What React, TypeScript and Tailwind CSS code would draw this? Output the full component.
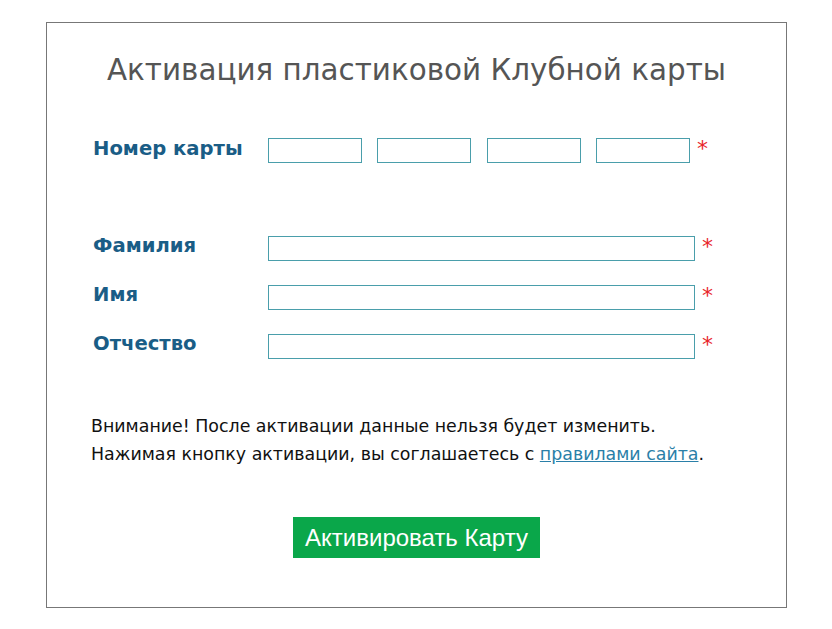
import React from "react";

const Star = () => (
  <span className="text-[#e8262b] text-[22px] leading-none ml-[7px] mt-[0px] font-['DejaVu_Sans',sans-serif]">*</span>
);

export default function App() {
  const labelCls =
    "w-[175px] shrink-0 text-[19.6px] font-bold text-[#1a5d86] font-['DejaVu_Sans',sans-serif] leading-none";
  const inputCls = "h-[25px] border border-[#4a9eab] bg-white outline-none";
  return (
    <div className="w-[832px] h-[629px] bg-white pt-[22px] pl-[46px]">
      <div className="w-[741px] h-[586px] border border-[#777] flex flex-col">
        <h1 className="text-center text-[29.4px] text-[#555] font-['DejaVu_Sans',sans-serif] leading-none mt-[33px]">
          Активация пластиковой Клубной карты
        </h1>
        <div className="pl-[46px] mt-[53px]">
          <div className="flex items-start">
            <div className={labelCls + " pt-[1px]"}>Номер карты</div>
            <div className="flex items-start">
              <input className={inputCls + " w-[94px]"} />
              <input className={inputCls + " w-[94px] ml-[15px]"} />
              <input className={inputCls + " w-[94px] ml-[16px]"} />
              <input className={inputCls + " w-[94px] ml-[15px]"} />
              <Star />
            </div>
          </div>
          <div className="flex flex-col gap-[24px] mt-[73px]">
            {["Фамилия", "Имя", "Отчество"].map((l) => (
              <div key={l} className="flex items-start">
                <div className={labelCls}>{l}</div>
                <input className={inputCls + " w-[427px]"} />
                <Star />
              </div>
            ))}
          </div>
          <div className="-ml-[2px] mt-[53px] text-[17.4px] text-[#111] font-['DejaVu_Sans',sans-serif] leading-[28px]">
            <p>Внимание! После активации данные нельзя будет изменить.</p>
            <p>
              Нажимая кнопку активации, вы соглашаетесь с{" "}
              <a href="#" className="text-[#2a7fa8] underline">правилами сайта</a>.
            </p>
          </div>
        </div>
        <div className="flex justify-center mt-[49px]">
          <button className="h-[41px] px-[12px] bg-[#0aa74a] text-white text-[24px] font-['Liberation_Sans',sans-serif] leading-none">
            Активировать Карту
          </button>
        </div>
      </div>
    </div>
  );
}
